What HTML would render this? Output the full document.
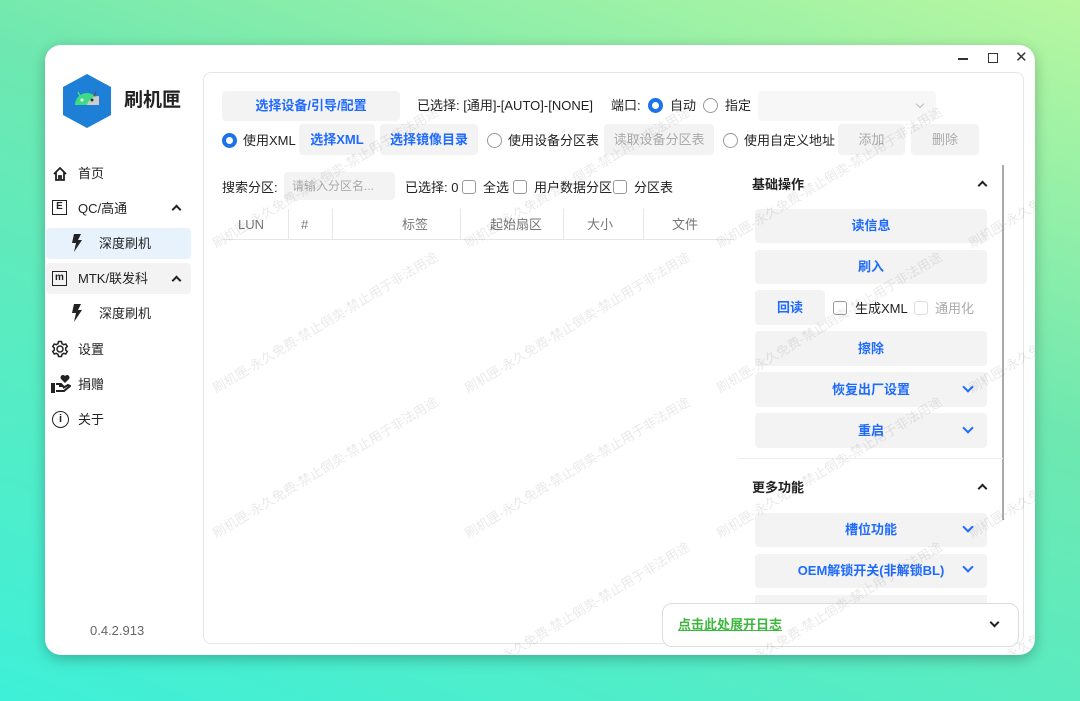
<!DOCTYPE html>
<html><head><meta charset="utf-8"><style>
*{margin:0;padding:0;box-sizing:border-box}
body{width:1080px;height:701px;overflow:hidden;font-family:"Liberation Sans","Noto Sans CJK SC",sans-serif;font-size:13px;color:#222;line-height:15px;
background:linear-gradient(200deg,#b8f7a0 0%,#6ee8b0 40%,#3ef0d8 100%);position:relative}
.win{position:absolute;left:45px;top:45px;width:990px;height:610px;background:#fff;border-radius:16px;box-shadow:0 4px 14px rgba(0,0,0,.25)}
.clip{position:absolute;left:45px;top:45px;width:990px;height:610px;border-radius:16px;overflow:hidden;pointer-events:none}
.a{position:absolute;white-space:nowrap}
.btn{position:absolute;background:#f3f3f3;border-radius:4px;color:#1f6bff;font-weight:bold;text-align:center;font-size:13px}
.dis{color:#aaa;font-weight:normal}
.radio{position:absolute;width:15px;height:15px;border-radius:50%;border:1.5px solid #999;background:#fff}
.radio.on{border:4.5px solid #1a73e8}
.cb{position:absolute;width:14px;height:14px;border:1px solid #999;border-radius:3px;background:#fff}
.wm{position:absolute;transform-origin:0 0;transform:rotate(-31deg);color:rgba(0,0,0,.09);font-size:13px;white-space:nowrap}
.chev{position:absolute;width:8px;height:8px;border-right:2px solid #1f6bff;border-bottom:2px solid #1f6bff;transform:rotate(45deg)}
.up{position:absolute;width:7px;height:7px;border-left:2px solid #222;border-top:2px solid #222;transform:rotate(45deg)}
.nav{position:absolute;left:78px;font-size:13px}
</style></head><body>
<div class="win"></div>
<div class="a" style="left:958px;top:58px;width:10px;height:1.5px;background:#333"></div>
<div class="a" style="left:988px;top:53px;width:10px;height:10px;border:1.5px solid #333"></div>
<div class="a" style="left:1015px;top:50px;font-size:15px;color:#333">✕</div>
<svg class="a" style="left:61px;top:73px" width="52" height="56" viewBox="0 0 52 56"><polygon points="26,1 50,14 50,42 26,55 2,42 2,14" fill="#1e7fd6"/><path d="M14,32 a12,12 0 0 1 24,0z" fill="#3ddc84"/><path d="M26,32 a12,12 0 0 1 12,-9 v9z" fill="#ccc"/><circle cx="21" cy="27" r="1.5" fill="#fff"/><circle cx="31" cy="27" r="1.5" fill="#333"/><line x1="17" y1="19" x2="19" y2="23" stroke="#3ddc84" stroke-width="1.5"/><line x1="35" y1="19" x2="33" y2="23" stroke="#555" stroke-width="1.5"/></svg>
<div class="a" style="left:124px;top:90px;font-size:19px;line-height:22px;font-weight:bold">刷机匣</div>
<svg class="a" style="left:52px;top:166px" width="16" height="16" viewBox="0 0 16 16"><path d="M2 8 L8 2 L14 8 M4 6.5 V14 H7 V10 H9 V14 H12 V6.5" fill="none" stroke="#222" stroke-width="1.8"/></svg>
<div class="nav" style="top:166px">首页</div>
<div class="a" style="left:52px;top:200px;width:15px;height:15px;border:1.8px solid #222;font-size:10px;font-weight:bold;text-align:center;line-height:12px">E</div>
<div class="nav" style="top:201px">QC/高通</div>
<div class="up" style="left:173px;top:206px"></div>
<div class="a" style="left:46px;top:228px;width:145px;height:31px;background:#e8f2fd;border-radius:4px"></div>
<svg class="a" style="left:71px;top:234px" width="12" height="18" viewBox="0 0 12 18"><path d="M3 0 H10 L7 6 H11 L3 18 L5 9 H1 Z" fill="#222"/></svg>
<div class="nav" style="left:99px;top:236px">深度刷机</div>
<div class="a" style="left:46px;top:263px;width:145px;height:31px;background:#f3f3f3;border-radius:4px"></div>
<div class="a" style="left:52px;top:271px;width:15px;height:15px;border:1.8px solid #222;font-size:10px;font-weight:bold;text-align:center;line-height:12px">m</div>
<div class="nav" style="top:271px">MTK/联发科</div>
<div class="up" style="left:173px;top:277px"></div>
<svg class="a" style="left:71px;top:304px" width="12" height="18" viewBox="0 0 12 18"><path d="M3 0 H10 L7 6 H11 L3 18 L5 9 H1 Z" fill="#222"/></svg>
<div class="nav" style="left:99px;top:306px">深度刷机</div>
<svg class="a" style="left:51px;top:340px" width="18" height="18" viewBox="0 0 24 24"><path d="M12 8a4 4 0 1 0 0 8a4 4 0 1 0 0-8z M10 2h4l.6 2.8 2.4 1.4 2.7-.9 2 3.4-2.1 1.9v2.8l2.1 1.9-2 3.4-2.7-.9-2.4 1.4L14 22h-4l-.6-2.8-2.4-1.4-2.7.9-2-3.4 2.1-1.9v-2.8L2.3 8.7l2-3.4 2.7.9 2.4-1.4z" fill="none" stroke="#222" stroke-width="2"/></svg>
<div class="nav" style="top:342px">设置</div>
<svg class="a" style="left:51px;top:375px" width="20" height="18" viewBox="0 0 20 18"><rect x="0" y="8" width="4" height="10" fill="#222"/><path d="M5 9 H10 L12 11 H8 M5 16 H13 L19 11 L17 10 L12 13" fill="none" stroke="#222" stroke-width="2"/><path d="M14 1 a2.5 2.5 0 0 1 4 3 L14 8 L10 4 a2.5 2.5 0 0 1 4 -3z" fill="#222"/></svg>
<div class="nav" style="top:377px">捐赠</div>
<div class="a" style="left:52px;top:411px;width:17px;height:17px;border:1.8px solid #222;border-radius:50%;font-size:11px;font-weight:bold;text-align:center;line-height:14px">i</div>
<div class="nav" style="top:412px">关于</div>
<div class="a" style="left:90px;top:623px;color:#666">0.4.2.913</div>
<div class="a" style="left:203px;top:72px;width:821px;height:572px;border:1px solid #e6e6e6;border-radius:8px"></div>
<div class="btn" style="left:222px;top:91px;width:178px;height:30px;line-height:30px">选择设备/引导/配置</div>
<div class="a" style="left:417px;top:98px">已选择: [通用]-[AUTO]-[NONE]</div>
<div class="a" style="left:611px;top:98px">端口:</div>
<div class="radio on" style="left:648px;top:98px"></div><div class="a" style="left:670px;top:98px">自动</div>
<div class="radio" style="left:703px;top:98px"></div><div class="a" style="left:725px;top:98px">指定</div>
<div class="a" style="left:758px;top:91px;width:178px;height:30px;background:#f7f7f7;border-radius:4px"></div>
<div class="a" style="left:917px;top:101px;width:6px;height:6px;border-right:1.5px solid #bbb;border-bottom:1.5px solid #bbb;transform:rotate(45deg)"></div>
<div class="radio on" style="left:222px;top:133px"></div><div class="a" style="left:243px;top:133px">使用XML</div>
<div class="btn" style="left:299px;top:124px;width:76px;height:31px;line-height:31px">选择XML</div>
<div class="btn" style="left:380px;top:124px;width:98px;height:31px;line-height:31px">选择镜像目录</div>
<div class="radio" style="left:487px;top:133px"></div><div class="a" style="left:508px;top:133px">使用设备分区表</div>
<div class="btn dis" style="left:604px;top:124px;width:110px;height:31px;line-height:31px">读取设备分区表</div>
<div class="radio" style="left:723px;top:133px"></div><div class="a" style="left:744px;top:133px">使用自定义地址</div>
<div class="btn dis" style="left:838px;top:124px;width:67px;height:31px;line-height:31px">添加</div>
<div class="btn dis" style="left:911px;top:124px;width:68px;height:31px;line-height:31px">删除</div>
<div class="a" style="left:222px;top:180px">搜索分区:</div>
<div class="a" style="left:284px;top:172px;width:111px;height:28px;background:#f3f3f3;border-radius:4px;color:#aaa;padding:7px 8px;font-size:12px">请输入分区名...</div>
<div class="a" style="left:405px;top:180px">已选择: 0</div>
<div class="cb" style="left:462px;top:180px"></div><div class="a" style="left:483px;top:180px">全选</div>
<div class="cb" style="left:513px;top:180px"></div><div class="a" style="left:534px;top:180px">用户数据分区</div>
<div class="cb" style="left:613px;top:180px"></div><div class="a" style="left:634px;top:180px">分区表</div>
<div class="a" style="left:222px;top:239px;width:512px;height:1px;background:#e6e6e6"></div>
<div class="a" style="left:288px;top:209px;width:1px;height:30px;background:#e6e6e6"></div>
<div class="a" style="left:332px;top:209px;width:1px;height:30px;background:#e6e6e6"></div>
<div class="a" style="left:460px;top:209px;width:1px;height:30px;background:#e6e6e6"></div>
<div class="a" style="left:563px;top:209px;width:1px;height:30px;background:#e6e6e6"></div>
<div class="a" style="left:643px;top:209px;width:1px;height:30px;background:#e6e6e6"></div>
<div class="a" style="left:238px;top:217px;color:#777">LUN</div>
<div class="a" style="left:301px;top:217px;color:#777">#</div>
<div class="a" style="left:402px;top:217px;color:#777">标签</div>
<div class="a" style="left:490px;top:217px;color:#777">起始扇区</div>
<div class="a" style="left:587px;top:217px;color:#777">大小</div>
<div class="a" style="left:672px;top:217px;color:#777">文件</div>
<div class="a" style="left:1002px;top:165px;width:2px;height:355px;background:#aaa"></div>
<div class="a" style="left:752px;top:177px;font-weight:bold">基础操作</div>
<div class="up" style="left:979px;top:182px"></div>
<div class="btn" style="left:755px;top:209px;width:232px;height:34px;line-height:34px">读信息</div>
<div class="btn" style="left:755px;top:250px;width:232px;height:34px;line-height:34px">刷入</div>
<div class="btn" style="left:755px;top:290px;width:70px;height:35px;line-height:35px">回读</div>
<div class="cb" style="left:833px;top:301px"></div><div class="a" style="left:855px;top:301px">生成XML</div>
<div class="cb" style="left:914px;top:301px;border-color:#ddd"></div><div class="a" style="left:935px;top:301px;color:#aaa">通用化</div>
<div class="btn" style="left:755px;top:331px;width:232px;height:35px;line-height:35px">擦除</div>
<div class="btn" style="left:755px;top:372px;width:232px;height:35px;line-height:35px">恢复出厂设置</div>
<div class="chev" style="left:964px;top:383px"></div>
<div class="btn" style="left:755px;top:413px;width:232px;height:35px;line-height:35px">重启</div>
<div class="chev" style="left:964px;top:424px"></div>
<div class="a" style="left:738px;top:458px;width:265px;height:1px;background:#eee"></div>
<div class="a" style="left:752px;top:480px;font-weight:bold">更多功能</div>
<div class="up" style="left:979px;top:485px"></div>
<div class="btn" style="left:755px;top:513px;width:232px;height:34px;line-height:34px">槽位功能</div>
<div class="chev" style="left:964px;top:523px"></div>
<div class="btn" style="left:755px;top:554px;width:232px;height:34px;line-height:34px">OEM解锁开关(非解锁BL)</div>
<div class="chev" style="left:964px;top:563px"></div>
<div class="a" style="left:755px;top:595px;width:232px;height:8px;background:#f3f3f3"></div>
<div class="a" style="left:662px;top:603px;width:357px;height:44px;background:#fff;border:1px solid #ddd;border-radius:10px"></div>
<div class="a" style="left:678px;top:617px;color:#3cb93c;text-decoration:underline;font-weight:bold">点击此处展开日志</div>
<div class="a" style="left:991px;top:619px;width:7px;height:7px;border-right:2px solid #222;border-bottom:2px solid #222;transform:rotate(45deg)"></div>
<div class="clip">
<div class="wm" style="left:165px;top:193px">刷机匣-永久免费-禁止倒卖-禁止用于非法用途</div>
<div class="wm" style="left:417px;top:193px">刷机匣-永久免费-禁止倒卖-禁止用于非法用途</div>
<div class="wm" style="left:669px;top:193px">刷机匣-永久免费-禁止倒卖-禁止用于非法用途</div>
<div class="wm" style="left:921px;top:193px">刷机匣-永久免费-禁止倒卖-禁止用于非法用途</div>
<div class="wm" style="left:165px;top:338px">刷机匣-永久免费-禁止倒卖-禁止用于非法用途</div>
<div class="wm" style="left:417px;top:338px">刷机匣-永久免费-禁止倒卖-禁止用于非法用途</div>
<div class="wm" style="left:669px;top:338px">刷机匣-永久免费-禁止倒卖-禁止用于非法用途</div>
<div class="wm" style="left:921px;top:338px">刷机匣-永久免费-禁止倒卖-禁止用于非法用途</div>
<div class="wm" style="left:165px;top:483px">刷机匣-永久免费-禁止倒卖-禁止用于非法用途</div>
<div class="wm" style="left:417px;top:483px">刷机匣-永久免费-禁止倒卖-禁止用于非法用途</div>
<div class="wm" style="left:669px;top:483px">刷机匣-永久免费-禁止倒卖-禁止用于非法用途</div>
<div class="wm" style="left:921px;top:483px">刷机匣-永久免费-禁止倒卖-禁止用于非法用途</div>
<div class="wm" style="left:417px;top:628px">刷机匣-永久免费-禁止倒卖-禁止用于非法用途</div>
<div class="wm" style="left:669px;top:628px">刷机匣-永久免费-禁止倒卖-禁止用于非法用途</div>
<div class="wm" style="left:921px;top:628px">刷机匣-永久免费-禁止倒卖-禁止用于非法用途</div>
</div>
</body></html>
